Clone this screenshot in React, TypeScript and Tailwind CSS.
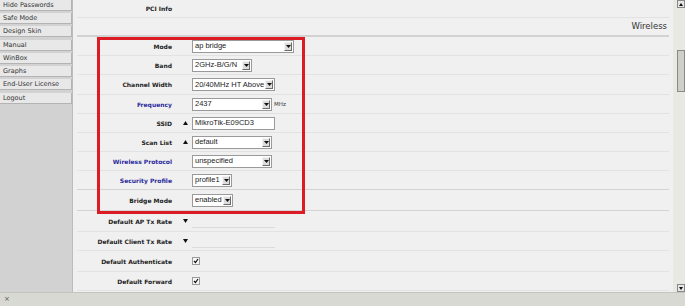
import React from "react";

type Row = {
  label: string;
  h: string;
  blue?: boolean;
  mark?: "up" | "down";
  kind: "select" | "text" | "check" | "empty" | "none";
  value?: string;
  w?: string;
  unit?: string;
  dark?: boolean;
};

const rows: Row[] = [
  { label: "Mode", h: "h-[19px]", kind: "select", value: "ap bridge", w: "w-[102px]" },
  { label: "Band", h: "h-[19px]", kind: "select", value: "2GHz-B/G/N", w: "w-[60px]" },
  { label: "Channel Width", h: "h-[20px]", kind: "select", value: "20/40MHz HT Above", w: "w-[83px]" },
  { label: "Frequency", h: "h-[19px]", blue: true, kind: "select", value: "2437", w: "w-[80px]", unit: "MHz" },
  { label: "SSID", h: "h-[19px]", mark: "up", kind: "text", value: "MikroTik-E09CD3", w: "w-[83px]" },
  { label: "Scan List", h: "h-[19px]", mark: "up", kind: "select", value: "default", w: "w-[80px]" },
  { label: "Wireless Protocol", h: "h-[19px]", blue: true, kind: "select", value: "unspecified", w: "w-[80px]" },
  { label: "Security Profile", h: "h-[19px]", blue: true, kind: "select", value: "profile1", w: "w-[40px]", dark: true },
  { label: "Bridge Mode", h: "h-[21px]", kind: "select", value: "enabled", w: "w-[41px]", dark: true },
  { label: "Default AP Tx Rate", h: "h-[21px]", mark: "down", kind: "empty" },
  { label: "Default Client Tx Rate", h: "h-[19px]", mark: "down", kind: "empty" },
  { label: "Default Authenticate", h: "h-[21px]", kind: "check" },
  { label: "Default Forward", h: "h-[19px]", kind: "check" },
];

const menu = [
  ["Hide Passwords", "Safe Mode", "Design Skin"],
  ["Manual", "WinBox", "Graphs", "End-User License"],
  ["Logout"],
];

function DropBtn() {
  return (
    <div className="mr-[1px] flex h-[9px] w-[8px] shrink-0 items-center justify-center border border-t-[#f4f4f4] border-l-[#f4f4f4] border-r-[#6b6b6b] border-b-[#6b6b6b] bg-[#dcdcdc]">
      <svg width="5" height="3" viewBox="0 0 5 3">
        <path d="M0 0h5L2.5 3z" fill="#111" />
      </svg>
    </div>
  );
}

function Field({ row }: { row: Row }) {
  if (row.kind === "select" || row.kind === "text") {
    return (
      <div className="flex items-center">
        <div
          className={`${row.w} flex h-[13px] items-center border border-[#9a9a9a] bg-white pl-[2px]`}
        >
          <span
            className="flex-1 overflow-hidden whitespace-nowrap text-[7.5px] leading-none text-[#222]"
            style={{ fontFamily: '"Liberation Sans", Arial, sans-serif' }}
          >
            {row.value}
          </span>
          {row.kind === "select" && <DropBtn />}
        </div>
        {row.unit && <span className="ml-[2px] text-[5.5px] text-[#333]">{row.unit}</span>}
      </div>
    );
  }
  if (row.kind === "check") {
    return (
      <div className="flex h-[8px] w-[8px] items-center justify-center border border-[#9a9a9a] bg-[#f7f7f7]">
        <svg width="6" height="6" viewBox="0 0 6 6">
          <path d="M1 3l1.5 1.5L5 1" stroke="#111" strokeWidth="1.2" fill="none" />
        </svg>
      </div>
    );
  }
  if (row.kind === "empty") {
    return <div className="mt-[12px] h-[1px] w-[83px] bg-[#dcdcdc]" />;
  }
  return null;
}

function Mark({ dir }: { dir?: "up" | "down" }) {
  if (!dir) return null;
  return (
    <svg width="5" height="4" viewBox="0 0 5 4">
      <path d={dir === "up" ? "M0 4h5L2.5 0z" : "M0 0h5L2.5 4z"} fill="#111" />
    </svg>
  );
}

export default function App() {
  return (
    <div
      className="flex h-[306px] w-[685px] flex-col overflow-hidden bg-[#f0f0f0]"
      style={{ fontFamily: '"DejaVu Sans", Verdana, sans-serif' }}
    >
      <div className="flex h-[292px]">
        {/* menu */}
        <div className="flex w-[73px] flex-col border-r border-[#bcbcbc] bg-[#d2d2d2]">
          {menu.map((group, gi) => (
            <div key={gi} className={gi > 0 ? "mt-[1px] flex flex-col gap-[2px]" : "flex flex-col gap-[2px]"}>
              {group.map((m) => (
                <div
                  key={m}
                  className="flex h-[11px] w-[72px] items-center border-b border-r border-[#b4b4b4] bg-[#e8e8e8] pl-[3px] text-[6.5px] leading-none text-[#333]"
                >
                  {m}
                </div>
              ))}
              <div className="h-[0px]" />
            </div>
          ))}
        </div>

        {/* content */}
        <div className="relative flex-1 px-[4px]">
          <div className="flex h-[18px] items-center border-b border-[#e2e2e2]">
            <div className="w-[95px] text-right text-[6px] font-bold text-[#222]">PCI Info</div>
          </div>
          <div className="flex h-[19px] items-end justify-end border-b-2 border-[#d2d2d2] pb-[2px] pr-[2px]">
            <span className="text-[8.5px] text-[#333]">Wireless</span>
          </div>
          {rows.map((r) => (
            <div
              key={r.label}
              className={`${r.h} flex items-center border-b ${r.dark ? "border-[#d4d4d4]" : "border-[#e2e2e2]"}`}
            >
              <div
                className={`w-[95px] text-right text-[6px] font-bold ${r.blue ? "text-[#2b2b9c]" : "text-[#222]"}`}
              >
                {r.label}
              </div>
              <div className="flex w-[20px] justify-center pl-[6px]">
                <Mark dir={r.mark} />
              </div>
              <Field row={r} />
            </div>
          ))}
          {/* highlight */}
          <div className="absolute left-[24px] top-[37px] h-[177px] w-[208px] border-[3px] border-[#dc1c24]" />
        </div>

        {/* scrollbar */}
        <div className="flex w-[12px] flex-col items-end bg-[#e9e9e4]">
          <div className="flex h-[8px] w-[8px] items-center justify-center border border-[#888] bg-[#e6e6e6]">
            <svg width="4" height="3" viewBox="0 0 4 3">
              <path d="M0 3h4L2 0z" fill="#111" />
            </svg>
          </div>
          <div className="mt-[42px] h-[42px] w-[8px] border border-[#8a8a8a] bg-[#cfcfca]" />
          <div className="flex-1" />
          <div className="flex h-[8px] w-[8px] items-center justify-center border border-[#888] bg-[#e6e6e6]">
            <svg width="4" height="3" viewBox="0 0 4 3">
              <path d="M0 0h4L2 3z" fill="#111" />
            </svg>
          </div>
        </div>
      </div>

      {/* status bar */}
      <div className="flex h-[14px] items-center border-t border-[#c4c4bc] bg-[#d9d9d3] pl-[4px]">
        <span className="text-[7px] leading-none text-[#555]">×</span>
      </div>
    </div>
  );
}
